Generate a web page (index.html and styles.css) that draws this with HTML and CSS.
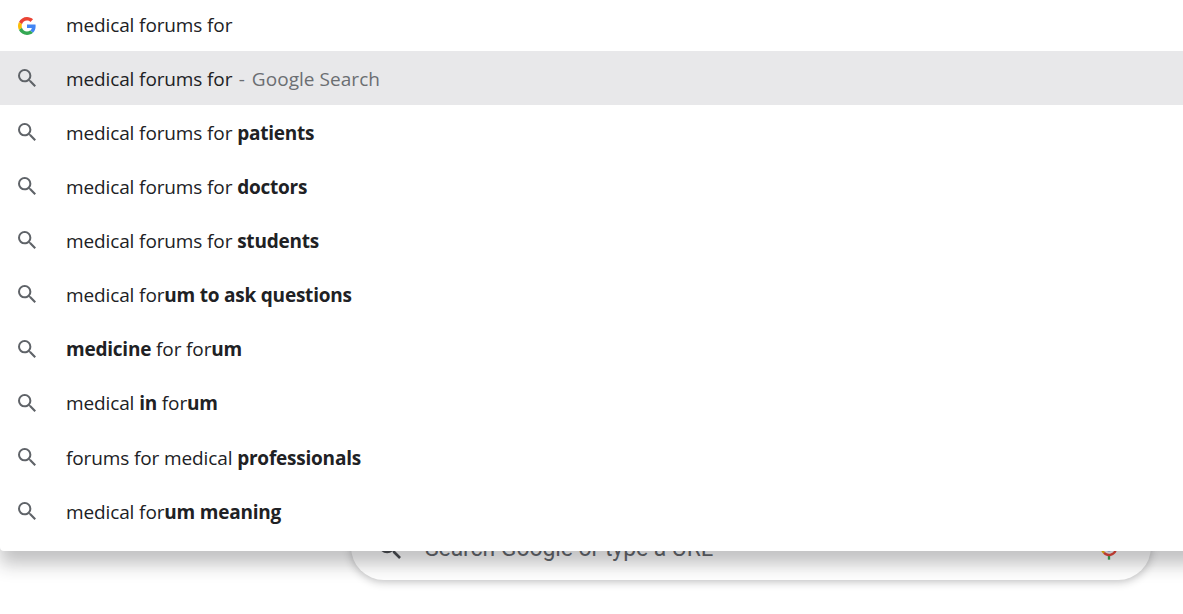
FILE: index.html
```html
<!DOCTYPE html>
<html lang="en">
<head>
<meta charset="utf-8">
<title>New Tab</title>
<link rel="stylesheet" href="styles.css">
</head>
<body>
<svg class="defs" width="0" height="0">
  <symbol id="search" viewBox="3 3 17.5 17.5"><path d="M15.5 14h-.79l-.28-.27A6.471 6.471 0 0 0 16 9.5 6.5 6.5 0 1 0 9.5 16c1.61 0 3.09-.59 4.23-1.57l.27.28v.79l5 4.99L20.49 19l-4.99-5zm-6 0C7.01 14 5 11.99 5 9.5S7.01 5 9.5 5 14 7.01 14 9.5 11.99 14 9.5 14z"/></symbol>
</svg>
<main class="page">
  <div class="searchbox">
    <svg class="searchbox-icon"><use href="#search"/></svg>
    <span class="searchbox-text">Search Google or type a URL</span>
    <svg class="mic" viewBox="0 0 24 24">
      <path fill="#4285f4" d="M12 15c1.66 0 3-1.31 3-2.97V5.03C15 3.37 13.66 2 12 2S9 3.37 9 5.03v7C9 13.69 10.34 15 12 15z"/>
      <path fill="#34a853" d="M11 18.1h2V22h-2z"/>
      <path fill="#fbbc04" d="M7.05 16.87C5.78 15.59 5 14 5 12.03h2c0 1.45.56 2.42 1.47 3.38v.32l-1.15 1.18z"/>
      <path fill="#ea4335" d="M12 16.93a4.97 4.97 0 0 1-3.54-1.55l-1.41 1.49C8.31 18.14 9.99 19 12 19c3.87 0 6.99-2.92 6.99-7h-1.99c0 2.92-2.24 4.93-5 4.93z"/>
    </svg>
  </div>
</main>
<section class="popup">
  <div class="query">
    <svg class="icon" viewBox="0 0 48 48">
      <path fill="#ea4335" d="M24 9.5c3.54 0 6.71 1.22 9.21 3.6l6.85-6.85C35.9 2.38 30.47 0 24 0 14.62 0 6.51 5.38 2.56 13.22l7.98 6.19C12.43 13.72 17.74 9.5 24 9.5z"/>
      <path fill="#4285f4" d="M46.98 24.55c0-1.57-.15-3.09-.38-4.55H24v9.02h12.94c-.58 2.96-2.26 5.48-4.78 7.18l7.73 6c4.51-4.18 7.09-10.36 7.09-17.65z"/>
      <path fill="#fbbc05" d="M10.53 28.59A14.5 14.5 0 0 1 9.77 24c0-1.6.27-3.14.76-4.59l-7.98-6.19A23.9 23.9 0 0 0 0 24c0 3.88.92 7.54 2.56 10.78z"/>
      <path fill="#34a853" d="M24 48c6.48 0 11.93-2.13 15.89-5.81l-7.73-6c-2.15 1.45-4.92 2.3-8.16 2.3-6.26 0-11.57-4.22-13.47-9.91l-7.98 6.19C6.51 42.62 14.62 48 24 48z"/>
    </svg>
    <span class="label">medical forums for</span>
  </div>
  <ul class="list">
    <li class="row selected"><svg class="icon"><use href="#search"/></svg><span class="label">medical forums for <span class="hint"><span class="dash">-</span>Google Search</span></span></li>
    <li class="row"><svg class="icon"><use href="#search"/></svg><span class="label">medical forums for <b>patients</b></span></li>
    <li class="row"><svg class="icon"><use href="#search"/></svg><span class="label">medical forums for <b>doctors</b></span></li>
    <li class="row"><svg class="icon"><use href="#search"/></svg><span class="label">medical forums for <b>students</b></span></li>
    <li class="row"><svg class="icon"><use href="#search"/></svg><span class="label">medical for<b>um to ask questions</b></span></li>
    <li class="row"><svg class="icon"><use href="#search"/></svg><span class="label"><b>medicine</b> for for<b>um</b></span></li>
    <li class="row"><svg class="icon"><use href="#search"/></svg><span class="label">medical <b>in</b> for<b>um</b></span></li>
    <li class="row"><svg class="icon"><use href="#search"/></svg><span class="label">forums for medical <b>professionals</b></span></li>
    <li class="row"><svg class="icon"><use href="#search"/></svg><span class="label">medical for<b>um meaning</b></span></li>
  </ul>
</section>
</body>
</html>
```
FILE: styles.css
```css
* { box-sizing: border-box; }
body {
  margin: 0;
  height: 614px;
  overflow: hidden;
  background: #fff;
  font-family: "Open Sans", "Noto Sans", sans-serif;
  font-size: 19px;
  letter-spacing: -.12px;
  color: #202124;
}
.defs { position: absolute; }
.page { padding: 514px 32px 0 351px; }
.searchbox {
  display: flex;
  align-items: center;
  height: 66px;
  padding: 2px 28px 0 28px;
  border-radius: 33px;
  background: #fff;
  box-shadow: 0 2px 9px rgba(32, 33, 36, .28);
}
.searchbox-icon { width: 22px; height: 22px; fill: #45484c; }
.searchbox-text {
  flex: 1;
  margin-left: 24px;
  font-family: Roboto, sans-serif;
  font-size: 23px;
  letter-spacing: -.08px;
  color: #5f6368;
}
.mic { width: 28px; height: 28px; }
.popup {
  position: absolute;
  top: 0;
  left: 0;
  width: 1203px;
  height: 551px;
  background: #fff;
  border-bottom-left-radius: 4px;
  box-shadow: 0 13px 18px rgba(32, 33, 36, .28);
}
.query, .row {
  display: flex;
  align-items: center;
  padding-left: 18px;
}
.query { height: 51px; }
.query .label { padding-bottom: 2px; }
.row { height: 54.1px; }
.row .label { padding-top: 1.6px; }
.list { margin: 0; padding: 0; list-style: none; }
.selected { background: #e8e8ea; }
.icon { width: 18px; height: 18px; fill: #5f6368; }
.label { margin-left: 30px; line-height: 26px; white-space: pre; }
.hint { color: #6b6e72; letter-spacing: .05px; }
.dash { margin: 0 7px 0 1.5px; }
b { font-weight: 700; letter-spacing: -.22px; }
```
